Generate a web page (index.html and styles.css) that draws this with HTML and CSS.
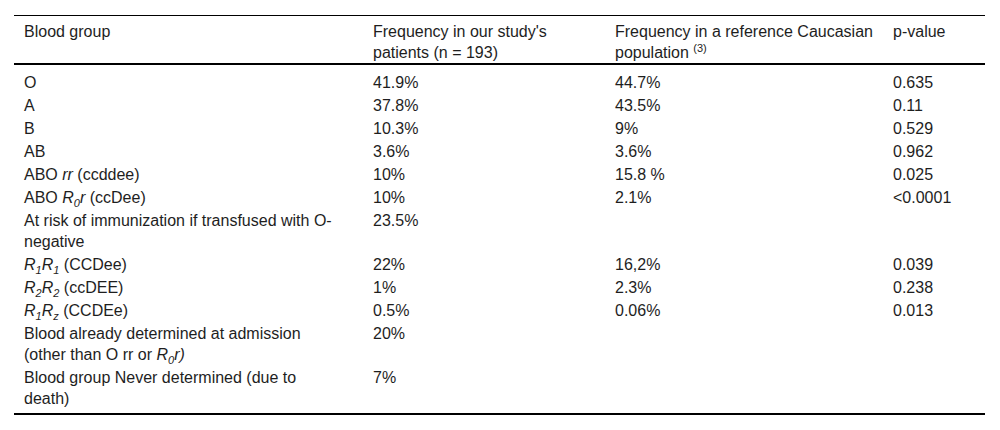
FILE: index.html
```html
<!DOCTYPE html>
<html>
<head>
<meta charset="utf-8">
<link rel="stylesheet" href="styles.css">
</head>
<body>
<table class="data">
  <colgroup>
    <col class="c1"><col class="c2"><col class="c3"><col class="c4">
  </colgroup>
  <thead>
    <tr>
      <th>Blood group</th>
      <th>Frequency in our study's patients (n = 193)</th>
      <th>Frequency in a reference Caucasian population <sup>(3)</sup></th>
      <th>p-value</th>
    </tr>
  </thead>
  <tbody>
    <tr><td>O</td><td>41.9%</td><td>44.7%</td><td>0.635</td></tr>
    <tr><td>A</td><td>37.8%</td><td>43.5%</td><td>0.11</td></tr>
    <tr><td>B</td><td>10.3%</td><td>9%</td><td>0.529</td></tr>
    <tr><td>AB</td><td>3.6%</td><td>3.6%</td><td>0.962</td></tr>
    <tr><td>ABO <i>rr</i> (ccddee)</td><td>10%</td><td>15.8 %</td><td>0.025</td></tr>
    <tr><td>ABO <i>R<sub>0</sub>r</i> (ccDee)</td><td>10%</td><td>2.1%</td><td>&lt;0.0001</td></tr>
    <tr><td>At risk of immunization if transfused with O-negative</td><td>23.5%</td><td></td><td></td></tr>
    <tr><td><i>R<sub>1</sub>R<sub>1</sub></i> (CCDee)</td><td>22%</td><td>16,2%</td><td>0.039</td></tr>
    <tr><td><i>R<sub>2</sub>R<sub>2</sub></i> (ccDEE)</td><td>1%</td><td>2.3%</td><td>0.238</td></tr>
    <tr><td><i>R<sub>1</sub>R<sub>z</sub></i> (CCDEe)</td><td>0.5%</td><td>0.06%</td><td>0.013</td></tr>
    <tr><td>Blood already determined at admission (other than O rr or <i>R<sub>0</sub>r)</i></td><td>20%</td><td></td><td></td></tr>
    <tr><td>Blood group Never determined (due to death)</td><td>7%</td><td></td><td></td></tr>
  </tbody>
</table>
</body>
</html>
```
FILE: styles.css
```css
html, body {
  margin: 0;
  padding: 0;
  background: #fff;
}
body {
  padding: 15px 15px 0 14px;
  font-family: "Liberation Sans", Arial, sans-serif;
  font-size: 16px;
  color: #1e1e1e;
}
.data {
  width: 971px;
  border-collapse: collapse;
  table-layout: fixed;
  border-top: 1px solid #000;
  border-bottom: 2px solid #000;
}
.c1 { width: 349px; }
.c2 { width: 242px; }
.c3 { width: 278px; }
.c4 { width: 102px; }
.data th {
  font-weight: normal;
  text-align: left;
  vertical-align: top;
  line-height: 21px;
  padding: 5px 10px 0 10px;
  border-bottom: 2px solid #000;
}
.data td {
  text-align: left;
  vertical-align: top;
  line-height: 21px;
  padding: 1px 10px 1px 10px;
}
.data th:nth-child(1), .data td:nth-child(1) { padding-right: 30px; }
.data th:nth-child(2), .data td:nth-child(2) { padding-right: 40px; }
.data th:nth-child(3), .data td:nth-child(3) { padding-right: 4px; }
.data th:nth-child(4), .data td:nth-child(4) { padding-right: 4px; }
.data tbody tr:first-child td { padding-top: 7px; }
.data tbody tr:last-child td { padding-bottom: 4px; }
.data sup {
  font-size: 11px;
  line-height: 0;
  vertical-align: 6px;
}
.data sub {
  font-size: 11px;
  line-height: 0;
  vertical-align: -4px;
}
```
